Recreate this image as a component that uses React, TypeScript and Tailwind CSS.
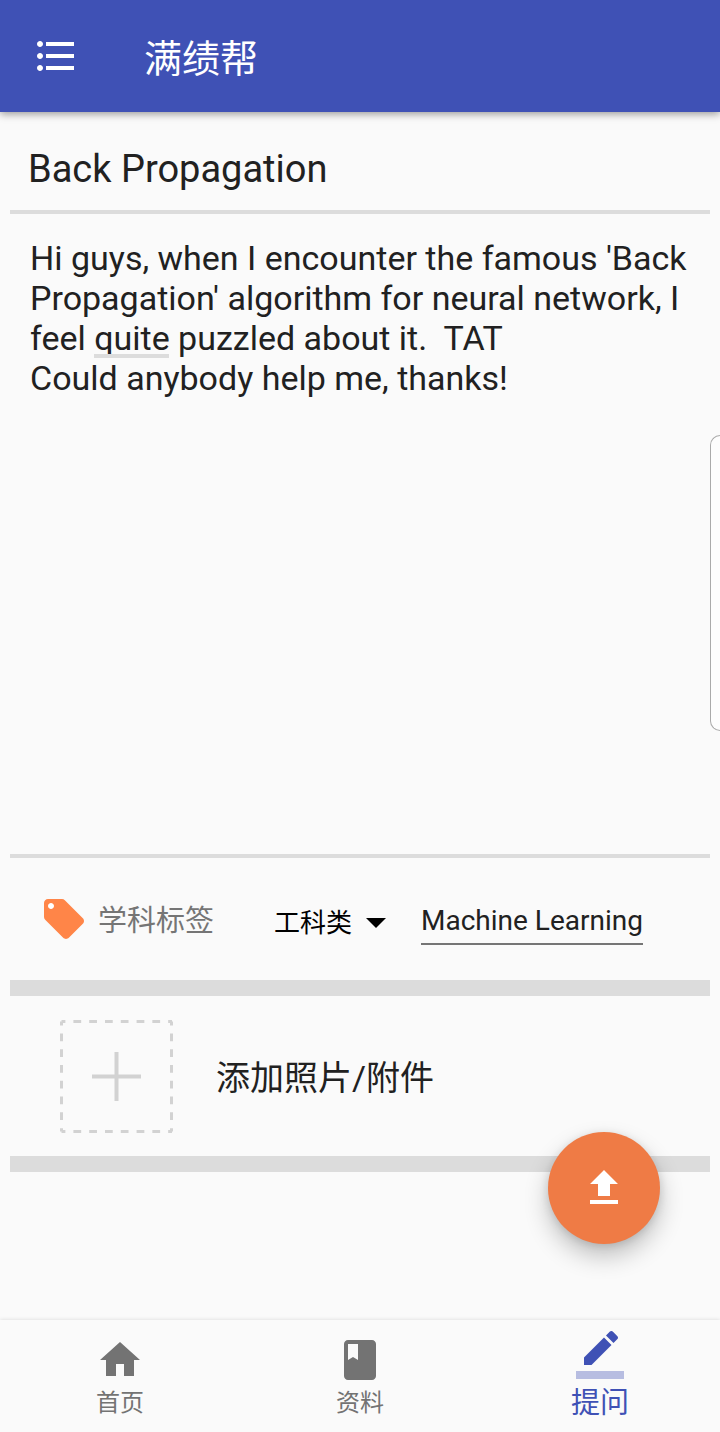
import { useState } from "react";
import type { ReactNode } from "react";

const FONT = "font-['Roboto','Noto_Sans_CJK_SC',sans-serif]";

function Icon({ children, className = "" }: { children: ReactNode; className?: string }) {
  return (
    <svg viewBox="0 0 24 24" fill="currentColor" aria-hidden="true" className={`size-12 shrink-0 ${className}`}>
      {children}
    </svg>
  );
}

function AddFrame() {
  return (
    <svg viewBox="0 0 114 114" aria-hidden="true" className="size-[114px] shrink-0" fill="none" stroke="#d2d2d2">
      <g strokeWidth="3" strokeDasharray="7.75 8.04" strokeDashoffset="3.875">
        <path d="M1.5 2.5H112" />
        <path d="M1.5 112.5H112" />
        <path d="M1.5 2.5V112.500" />
        <path d="M111.5 2.5V112.500" />
      </g>
      <path d="M32 57.5H81M56.5 33V82" strokeWidth="4" />
    </svg>
  );
}

function NavItem({ label, active = false, children }: { label: string; active?: boolean; children: ReactNode }) {
  return (
    <a
      href="#"
      aria-current={active ? "page" : undefined}
      className={`flex flex-1 flex-col items-center ${active ? "pt-[11px] text-[29px] text-[#3f51b5]" : "pt-4 text-[24px] text-[#737373]"}`}
    >
      <Icon>{children}</Icon>
      <span className={active ? "leading-[48px]" : "leading-[38px]"}>{label}</span>
    </a>
  );
}

export default function App() {
  const [title, setTitle] = useState("Back Propagation");
  const [body, setBody] = useState(
    "Hi guys, when I encounter the famous 'Back Propagation' algorithm for neural network, I feel quite puzzled about it.  TAT\nCould anybody help me, thanks!"
  );
  const [tag, setTag] = useState("Machine Learning");

  return (
    <div className={`relative flex min-h-screen flex-col overflow-hidden bg-[#fafafa] text-[#212121] ${FONT}`}>
      <header className="z-10 flex h-28 items-center bg-[#3f51b5] px-8 text-white shadow-[0_2px_8px_rgba(0,0,0,0.4)]">
        <button type="button" aria-label="菜单">
          <Icon>
            <path d="M4 10.5c-.83 0-1.5.67-1.5 1.5s.67 1.5 1.5 1.5 1.5-.67 1.5-1.5-.67-1.5-1.5-1.5zm0-6c-.83 0-1.5.67-1.5 1.5S3.17 7.5 4 7.5 5.5 6.83 5.5 6 4.83 4.5 4 4.5zm0 12c-.83 0-1.5.68-1.5 1.5s.68 1.5 1.5 1.5 1.5-.68 1.5-1.5-.67-1.5-1.5-1.5zM7 19h14v-2H7v2zm0-6h14v-2H7v2zm0-8v2h14V5H7z" />
          </Icon>
        </button>
        <h1 className="ml-16 pt-1.5 text-[38px] leading-[56px]">满绩帮</h1>
      </header>

      <main className="flex flex-1 flex-col px-[10px]">
        <input
          aria-label="标题"
          value={title}
          onChange={(e) => setTitle(e.target.value)}
          className="h-[98px] w-full border-0 bg-transparent px-[18px] pt-4 text-[38px] outline-none"
        />
        <div className="h-1 bg-[#dcdcdc]" />
        <div className="relative flex flex-1 flex-col">
          <textarea
            aria-label="问题描述"
            spellCheck={false}
            value={body}
            onChange={(e) => setBody(e.target.value)}
            className="w-full flex-1 resize-none border-0 bg-transparent px-5 py-6 text-[34px] leading-10 outline-none"
          />
          <span className="absolute top-[140px] left-[84px] h-1 w-[75px] bg-[#dcdcdc]" />
        </div>
        <div className="h-1 bg-[#dcdcdc]" />

        <section className="flex h-[122px] items-center px-[30px]">
          <Icon className="text-[#ff8548]">
            <circle cx="5.5" cy="5.5" r="2" fill="#fff" />
            <path d="M21.41 11.58l-9-9C12.05 2.22 11.55 2 11 2H4c-1.1 0-2 .9-2 2v7c0 .55.22 1.05.59 1.42l9 9c.36.36.86.58 1.41.58.55 0 1.05-.22 1.41-.59l7-7c.37-.36.59-.86.59-1.41 0-.55-.23-1.06-.59-1.42zM5.5 7C4.67 7 4 6.33 4 5.5S4.67 4 5.5 4 7 4.67 7 5.5 6.33 7 5.5 7z" />
          </Icon>
          <label htmlFor="subject" className="ml-[10px] pt-1.5 text-[29px] text-[#757575]">
            学科标签
          </label>
          <div className="relative ml-[60px] flex items-center pt-2">
            <select id="subject" className="w-28 appearance-none border-0 bg-transparent p-0 text-[26px] text-black outline-none">
              <option>工科类</option>
              <option>理科类</option>
              <option>文科类</option>
            </select>
            <svg viewBox="0 0 20 10" aria-hidden="true" className="pointer-events-none absolute right-0 h-[10px] w-5">
              <path d="M0 0H20L10 10Z" />
            </svg>
          </div>
          <input
            aria-label="标签"
            value={tag}
            onChange={(e) => setTag(e.target.value)}
            className="mt-1 ml-[35px] h-12 w-[222px] border-b-2 border-[#757575] bg-transparent text-[28px] outline-none"
          />
        </section>
        <div className="h-4 bg-[#dcdcdc]" />

        <button type="button" className="flex h-40 items-center gap-[42px] px-[50px] text-left text-[34px]">
          <AddFrame />
          <span className="pt-1">添加照片/附件</span>
        </button>
        <div className="mb-[148px] h-4 bg-[#dcdcdc]" />
      </main>

      <nav className="flex h-28 bg-[#fafafa] shadow-[0_0_4px_rgba(0,0,0,0.14)]">
        <NavItem label="首页">
          <path d="M10 20v-6h4v6h5v-8h3L12 3 2 12h3v8z" />
        </NavItem>
        <NavItem label="资料">
          <path d="M18 2H6c-1.1 0-2 .9-2 2v16c0 1.1.9 2 2 2h12c1.1 0 2-.9 2-2V4c0-1.1-.9-2-2-2zM6 4h5v8l-2.5-1.5L6 12V4z" />
        </NavItem>
        <NavItem label="提问" active>
          <path d="M17.75 7L14 3.25l-10 10V17h3.75l10-10zm2.96-2.96c.39-.39.39-1.02 0-1.41L18.37.29c-.39-.39-1.02-.39-1.41 0L15 2.25 18.75 6l1.96-1.96z" />
          <path fillOpacity=".36" d="M0 20h24v4H0z" />
        </NavItem>
      </nav>

      <button
        type="button"
        aria-label="发布"
        className="absolute right-[60px] bottom-[188px] flex size-28 items-center justify-center rounded-full bg-[#ef7b45] text-white shadow-[0_12px_24px_rgba(0,0,0,0.24),0_2px_8px_rgba(0,0,0,0.12)]"
      >
        <Icon>
          <path d="M9 16h6v-6h4l-7-7-7 7h4zm-4 2h14v2H5z" />
        </Icon>
      </button>

      <div className="absolute top-[435px] right-0 h-[296px] w-[10px] rounded-l-[12px] border border-r-0 border-[#aaaaaa] bg-[#fdfdfd]" />
    </div>
  );
}
